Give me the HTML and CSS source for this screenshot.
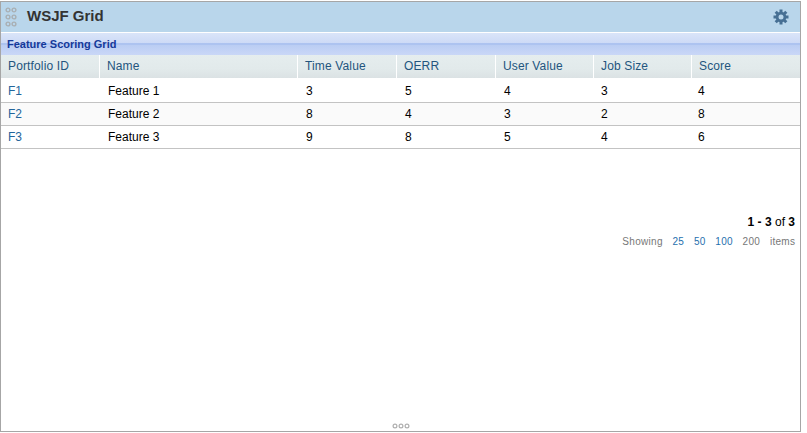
FILE: index.html
```html
<!DOCTYPE html>
<html lang="en">
<head>
<meta charset="utf-8">
<title>WSJF Grid</title>
<link rel="stylesheet" href="styles.css">
</head>
<body>
<section class="panel">
  <header class="panel-header">
    <svg class="grip" width="12" height="20" viewBox="0 0 12 20">
      <g fill="none" stroke="#a9afb3" stroke-width="1.4">
        <circle cx="3" cy="3" r="1.9"/><circle cx="9" cy="3" r="1.9"/>
        <circle cx="3" cy="10" r="1.9"/><circle cx="9" cy="10" r="1.9"/>
        <circle cx="3" cy="17" r="1.9"/><circle cx="9" cy="17" r="1.9"/>
      </g>
    </svg>
    <h1>WSJF Grid</h1>
    <svg class="gear" width="16" height="16" viewBox="-8 -8 16 16">
      <g fill="#477094">
        <rect x="-1.5" y="-7.5" width="3" height="15"/>
        <rect x="-1.5" y="-7.5" width="3" height="15" transform="rotate(45)"/>
        <rect x="-1.5" y="-7.5" width="3" height="15" transform="rotate(90)"/>
        <rect x="-1.5" y="-7.5" width="3" height="15" transform="rotate(135)"/>
        <circle r="5.3"/>
      </g>
      <circle r="2.5" fill="#b9d6eb"/>
    </svg>
  </header>
  <h2 class="grid-title">Feature Scoring Grid</h2>
  <div class="row head"><span>Portfolio ID</span><span>Name</span><span>Time Value</span><span>OERR</span><span>User Value</span><span>Job Size</span><span>Score</span></div>
  <div class="row first"><a>F1</a><span>Feature 1</span><span>3</span><span>5</span><span>4</span><span>3</span><span>4</span></div>
  <div class="row alt"><a>F2</a><span>Feature 2</span><span>8</span><span>4</span><span>3</span><span>2</span><span>8</span></div>
  <div class="row"><a>F3</a><span>Feature 3</span><span>9</span><span>8</span><span>5</span><span>4</span><span>6</span></div>
  <footer class="pager">
    <div class="range"><b>1 - 3</b> of <b>3</b></div>
    <div class="sizes"><span>Showing</span><a>25</a><a>50</a><a>100</a><span>200</span><span>items</span></div>
  </footer>
  <svg class="resize" width="18" height="6" viewBox="0 0 18 6">
    <g fill="none" stroke="#b0b0b0" stroke-width="1.2">
      <circle cx="3" cy="3" r="1.9"/><circle cx="9" cy="3" r="1.9"/><circle cx="15" cy="3" r="1.9"/>
    </g>
  </svg>
</section>
</body>
</html>
```

FILE: styles.css
```css
* { box-sizing: border-box; }
body {
  margin: 0;
  background: #fff;
  color: #000;
  font: 12px/14px "Liberation Sans", Arial, sans-serif;
}
.panel {
  display: flex;
  flex-direction: column;
  width: 801px;
  height: 431px;
  margin-top: 1px;
  border: 1px solid #a6a6a6;
}
.panel-header {
  display: flex;
  align-items: center;
  height: 31px;
  padding: 0 11px 1px 4px;
  background: #b9d6eb;
  border-bottom: 1px solid #fff;
}
h1 {
  flex: 1;
  margin: 0 0 2px 10px;
  color: #333;
  font-size: 15px;
  line-height: 18px;
}
.gear { margin-top: 1px; }
.grid-title {
  height: 22px;
  margin: 0;
  padding: 0 6px;
  background: linear-gradient(#dae5f9, #cddaf6 10px, #adc3f0 10px, #adc3f0 12px, #bacdf3 12px, #c9d7f7);
  color: #15399a;
  font-size: 11px;
  line-height: 23px;
}
.row {
  display: grid;
  grid-template-columns: 99px 198px 99px 99px 98px 98px 1fr;
  height: 23px;
  border-bottom: 1px solid #c3c3c3;
  line-height: 22px;
}
.row > * { padding-left: 8px; }
.row > :first-child { padding-left: 7px; }
.row > :nth-child(6) { padding-left: 7px; }
.row > :last-child { padding-left: 6px; }
.head {
  border: 0;
  background: linear-gradient(#e5edee, #e2eaeb 60%, #dbe2e4);
  color: #23557e;
  letter-spacing: .14px;
}
.head > * { padding-left: 7px; border-right: 1px solid #fff; }
.head > :last-child { padding-left: 7px; border: 0; }
.first { height: 25px; padding-top: 2px; }
.alt { background: #fafafa; }
a { color: #23659b; }
.pager {
  margin: 66px 5px 0 0;
  text-align: right;
}
.sizes {
  display: flex;
  justify-content: flex-end;
  gap: 9.7px;
  margin-top: 6px;
  color: #777;
  font-size: 10px;
  line-height: 14px;
}
.sizes > * { letter-spacing: .3px; }
.sizes > :last-child { margin-right: -.3px; }
.sizes a { color: #1f6fae; }
.resize {
  align-self: center;
  margin: auto 0 2px;
}
```
